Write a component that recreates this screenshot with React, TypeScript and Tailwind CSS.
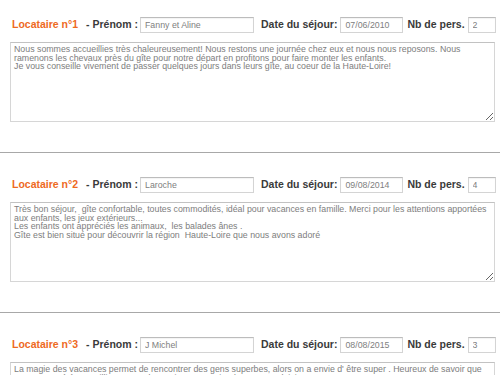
import React from 'react';

const REVIEWS = [
  {
    n: 1,
    prenom: 'Fanny et Aline',
    date: '07/06/2010',
    pers: '2',
    text: "Nous sommes accueillies très chaleureusement! Nous restons une journée chez eux et nous nous reposons. Nous ramenons les chevaux près du gîte pour notre départ en profitons pour faire monter les enfants.\nJe vous conseille vivement de passer quelques jours dans leurs gîte, au coeur de la Haute-Loire!",
  },
  {
    n: 2,
    prenom: 'Laroche',
    date: '09/08/2014',
    pers: '4',
    text: "Très bon séjour,  gîte confortable, toutes commodités, idéal pour vacances en famille. Merci pour les attentions apportées aux enfants, les jeux extérieurs...\nLes enfants ont appréciés les animaux,  les balades ânes .\nGîte est bien situé pour découvrir la région  Haute-Loire que nous avons adoré",
  },
  {
    n: 3,
    prenom: 'J Michel',
    date: '08/08/2015',
    pers: '3',
    text: "La magie des vacances permet de rencontrer des gens superbes, alors on a envie d' être super . Heureux de savoir que nous avons été accueillis comme des amis, nous reviendrons avec plaisir.",
  },
];

const font = { fontFamily: '"Liberation Sans", Arial, sans-serif' };

function Field({ value, width }: { value: string; width: string }) {
  return (
    <input
      readOnly
      value={value}
      className={`${width} h-[16px] border border-[#d4d4d4] border-t-[#bcbcbc] bg-white px-[4px] text-[8.8px] font-normal text-[#808080] outline-none shadow-[inset_0_1px_1px_rgba(0,0,0,0.05)]`}
      style={font}
    />
  );
}

export default function App() {
  return (
    <div className="w-[500px] bg-white" style={font}>
      {REVIEWS.map((r, i) => (
        <div key={r.n}>
          <div className={i === 0 ? 'pt-[17px]' : 'pt-[24px]'}>
            <div className="flex items-center h-[16px] pl-[12px] text-[10.5px] font-bold">
              <span className="text-[#ee6a1e]">Locataire n°{r.n}</span>
              <span className="ml-[8px] text-[#3a3a3a]">- Prénom :</span>
              <span className="ml-[2px]">
                <Field value={r.prenom} width="w-[114px]" />
              </span>
              <span className="ml-[7px] text-[#3a3a3a]">Date du séjour:</span>
              <span className="ml-[3px]">
                <Field value={r.date} width="w-[63px]" />
              </span>
              <span className="ml-[4px] text-[#3a3a3a]">Nb de pers.</span>
              <span className="ml-[3px]">
                <Field value={r.pers} width="w-[28px]" />
              </span>
            </div>
            <div className="pl-[10px] pr-[5px] mt-[9px]">
              <textarea
                readOnly
                defaultValue={r.text}
                className="block w-full h-[80px] border border-[#d6d6d6] border-t-[#c2c2c2] bg-white px-[3px] py-[2px] text-[8.8px] leading-[8.7px] text-[#7d7d7d] outline-none"
                style={font}
              />
            </div>
          </div>
          <div className="mt-[30px] h-px bg-[#a8a8a8]" />
        </div>
      ))}
    </div>
  );
}
